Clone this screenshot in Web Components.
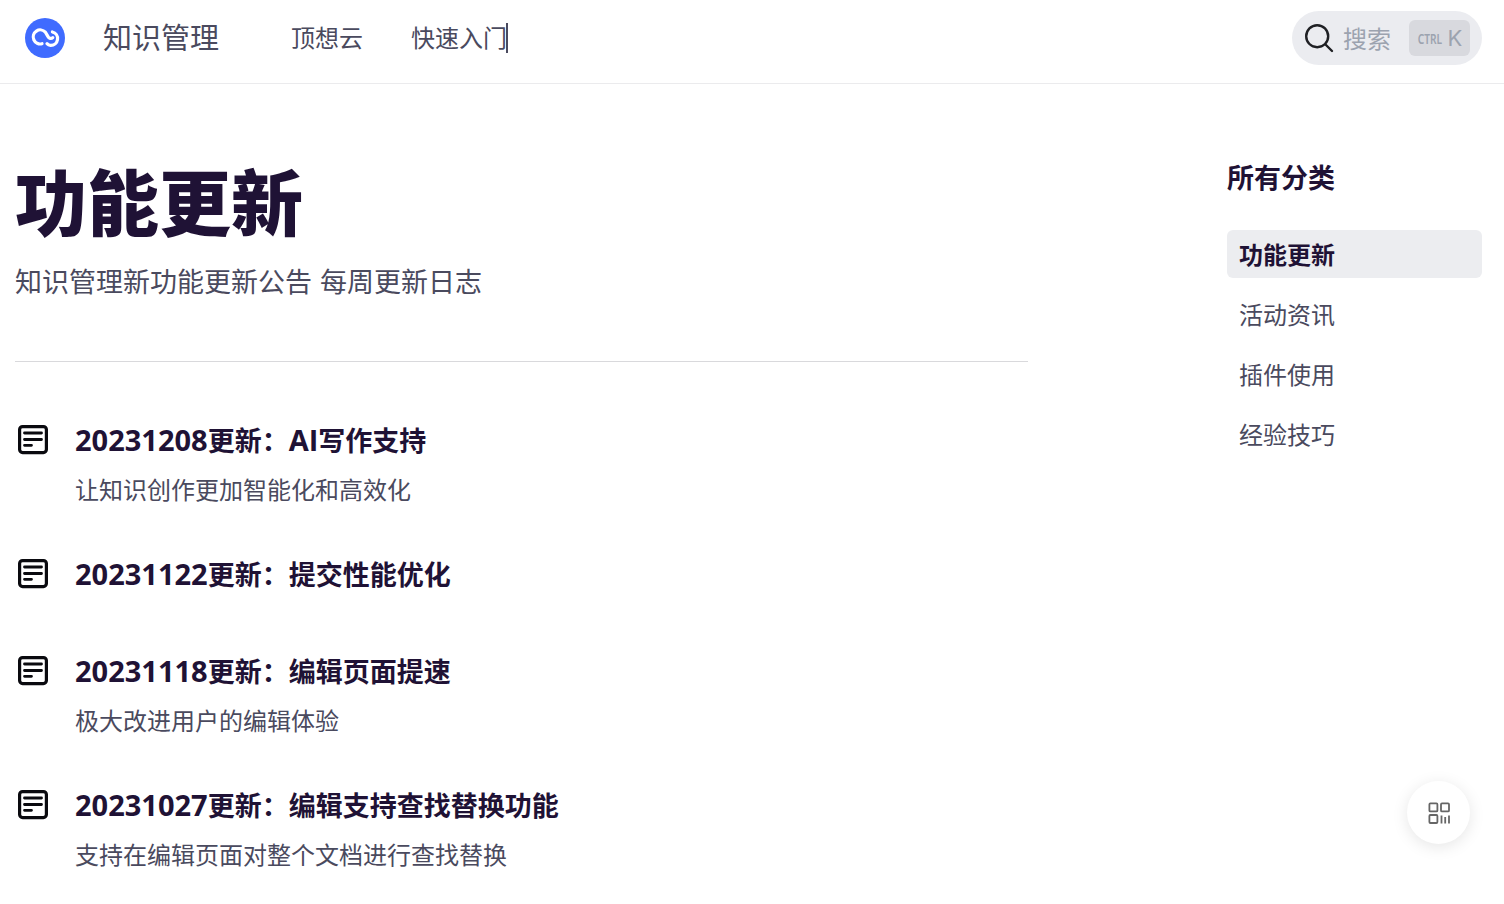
<!DOCTYPE html>
<html lang="zh">
<head>
<meta charset="utf-8">
<title>功能更新</title>
<style>
    html, body {
        margin: 0;
        padding: 0;
        height: 100%;
        overflow: hidden;
        background: #fff;
        font-family: 'Noto Sans', 'Noto Sans CJK SC', sans-serif;
    }
</style>
</head>
<body>
<site-header></site-header>
<page-layout>
    <div slot="main">
        <page-title titel="功能更新" undertekst="知识管理新功能更新公告 每周更新日志"></page-title>
        <update-item titel="20231208更新：AI写作支持" info="让知识创作更加智能化和高效化"></update-item>
        <update-item titel="20231122更新：提交性能优化"></update-item>
        <update-item titel="20231118更新：编辑页面提速" info="极大改进用户的编辑体验"></update-item>
        <update-item titel="20231027更新：编辑支持查找替换功能" info="支持在编辑页面对整个文档进行查找替换"></update-item>
    </div>
    <category-list slot="side">
        <category-link active>功能更新</category-link>
        <category-link>活动资讯</category-link>
        <category-link>插件使用</category-link>
        <category-link>经验技巧</category-link>
    </category-list>
</page-layout>
<qr-button></qr-button>

<script>
class SiteHeader extends HTMLElement {
    constructor() {
        super();
        this.attachShadow({ mode: 'open' });
    }

    connectedCallback() {
        this.shadowRoot.innerHTML = `
        <style>
            :host {
                display: flex;
                align-items: center;
                box-sizing: border-box;
                height: 84px;
                padding: 0 22px 8px 25px;
                border-bottom: 1px solid #ebebed;
                color: #4a4a5e;
            }
            #logo { width: 40px; height: 40px; flex: none; margin-right: 38px; }
            #navn { font-size: 29px; line-height: 40px; width: 188px; flex: none; }
            nav { display: flex; align-items: center; gap: 48px; font-size: 24px; line-height: 36px; }
            #inn { border-right: 2px solid #4a4a5e; width: 95px; white-space: nowrap; height: 30px; line-height: 30px; }
            #sok {
                margin-left: auto;
                display: flex;
                align-items: center;
                box-sizing: border-box;
                width: 190px;
                height: 54px;
                padding: 0 12px 0 12px;
                border-radius: 27px;
                background: #ebecf0;
                color: #9ca3af;
                font-size: 24px;
            }
            #sok svg { width: 30px; height: 30px; flex: none; margin-right: 9px; }
            kbd {
                margin-left: auto;
                display: flex;
                align-items: center;
                justify-content: center;
                gap: 5px;
                width: 61px;
                height: 36px;
                border-radius: 6px;
                background: #d8d9de;
                font-family: Inter, sans-serif;
                font-size: 22px;
                color: #9ca3af;
            }
            kbd small {
                font-family: 'Noto Sans', sans-serif;
                font-size: 15px;
                font-weight: 600;
                transform: scaleX(0.68);
                margin: 0 -5px;
            }
        </style>
        <svg id="logo" viewBox="0 0 40 40">
            <circle cx="20" cy="20" r="20" fill="#3f6bff"/>
            <path d="M17 25.7 A7 7 0 1 1 20.4 14.2 L23 18.6 A3 3 0 0 0 27.8 19.6" fill="none" stroke="#fff" stroke-width="3.2" stroke-linecap="round"/>
            <path d="M27.4 14 A6.8 6.8 0 0 1 25.6 27.4 A5.5 5.5 0 0 1 22 25.6" fill="none" stroke="#fff" stroke-width="3.2" stroke-linecap="round"/>
        </svg>
        <div id="navn">知识管理</div>
        <nav>
            <span>顶想云</span>
            <span id="inn">快速入门</span>
        </nav>
        <div id="sok">
            <svg viewBox="0 0 30 30" fill="none" stroke="#1f2024" stroke-width="2.4" stroke-linecap="round">
                <circle cx="13.2" cy="13.2" r="11"/>
                <path d="M21.5 21.5 L28 28"/>
            </svg>
            <span>搜索</span>
            <kbd><small>CTRL</small><span>K</span></kbd>
        </div>
        `
    }
}

class PageLayout extends HTMLElement {
    constructor() {
        super();
        this.attachShadow({ mode: 'open' });
    }

    connectedCallback() {
        this.shadowRoot.innerHTML = `
        <style>
            :host {
                display: flex;
                justify-content: space-between;
                padding: 0 22px 0 15px;
            }
            #main { width: 1013px; flex: none; }
            #side { width: 255px; flex: none; padding-top: 73px; }
        </style>
        <div id="main"><slot name="main"></slot></div>
        <div id="side"><slot name="side"></slot></div>
        `
    }
}

class PageTitle extends HTMLElement {
    constructor() {
        super();
        this.attachShadow({ mode: 'open' });
    }

    connectedCallback() {
        this.shadowRoot.innerHTML = `
        <style>
            :host {
                display: block;
                padding-top: 74px;
                padding-bottom: 57px;
                margin-bottom: 59px;
                border-bottom: 1px solid #d9d9dc;
            }
            h1 {
                margin: 0;
                font-size: 72px;
                line-height: 88px;
                font-weight: 900;
                color: #1f1235;
            }
            p {
                margin: 0;
                margin-top: 14px;
                font-size: 27px;
                line-height: 44px;
                word-spacing: 1px;
                color: #4a4a5e;
            }
        </style>
        <h1>${this.getAttribute('titel')}</h1>
        <p>${this.getAttribute('undertekst')}</p>
        `
    }
}

class UpdateItem extends HTMLElement {
    constructor() {
        super();
        this.attachShadow({ mode: 'open' });
    }

    // latin and digits run a little larger than the CJK in the titles
    get titel() {
        return this.getAttribute('titel').replace(/[0-9A-Za-z]+/g, '<span>$&</span>');
    }

    connectedCallback() {
        let info = this.getAttribute('info');
        this.shadowRoot.innerHTML = `
        <style>
            :host {
                display: flex;
                margin-bottom: 47px;
            }
            svg { width: 36px; height: 36px; flex: none; margin-top: 1px; margin-right: 24px; }
            h3 {
                margin: 0;
                margin-bottom: 12px;
                height: 38px;
                font-family: 'Open Sans', 'Noto Sans CJK SC', sans-serif;
                font-size: 27px;
                line-height: 38px;
                font-weight: 700;
                color: #1f1235;
            }
            h3 span { font-size: 29px; }
            p {
                margin: 0;
                font-size: 24px;
                line-height: 37px;
                color: #4a4a5e;
            }
        </style>
        <svg viewBox="0 0 36 36" fill="none" stroke="#0a0a0f" stroke-linecap="round">
            <rect x="4.6" y="4.6" width="26.8" height="26" rx="3" stroke-width="3.2"/>
            <path d="M9.5 11 H26.5 M9.5 17.5 H26.5 M9.5 23.3 H16.5" stroke-width="2.8"/>
        </svg>
        <div>
            <h3>${this.titel}</h3>
            ${info ? `<p>${info}</p>` : ''}
        </div>
        `
    }
}

class CategoryList extends HTMLElement {
    constructor() {
        super();
        this.attachShadow({ mode: 'open' });
    }

    connectedCallback() {
        this.shadowRoot.innerHTML = `
        <style>
            :host { display: block; }
            h4 {
                margin: 0 0 31px 0;
                font-size: 27px;
                line-height: 42px;
                font-weight: 700;
                color: #1f1235;
            }
            #liste { display: flex; flex-direction: column; gap: 12px; }
        </style>
        <h4>所有分类</h4>
        <div id="liste"><slot></slot></div>
        `
    }
}

class CategoryLink extends HTMLElement {
    constructor() {
        super();
        this.attachShadow({ mode: 'open' });
    }

    connectedCallback() {
        this.shadowRoot.innerHTML = `
        <style>
            :host {
                display: block;
                box-sizing: border-box;
                height: 48px;
                padding: 0 12px;
                border-radius: 6px;
                font-size: 24px;
                line-height: 50px;
                color: #4a4a5e;
            }
            :host([active]) {
                background: #ecedf0;
                font-weight: 700;
                color: #1f1235;
            }
        </style>
        <slot></slot>
        `
    }
}

class QrButton extends HTMLElement {
    constructor() {
        super();
        this.attachShadow({ mode: 'open' });
    }

    connectedCallback() {
        this.shadowRoot.innerHTML = `
        <style>
            :host {
                position: fixed;
                left: 1407px;
                top: 781px;
                width: 63px;
                height: 63px;
                display: flex;
                align-items: center;
                justify-content: center;
                border-radius: 50%;
                background: #fff;
                box-shadow: 0 3px 16px rgba(0,0,0,0.10);
            }
            svg { width: 24px; height: 24px; }
        </style>
        <svg viewBox="0 0 24 24" fill="none" stroke="#666" stroke-width="1.8">
            <rect x="2.4" y="2.4" width="8" height="8" rx="1"/>
            <rect x="14" y="2.4" width="8" height="8" rx="1"/>
            <rect x="2.4" y="14" width="8" height="8" rx="1"/>
            <path d="M14.5 14.5 V22.5 M18.2 16 V22.5 M22 14.5 V22.5"/>
        </svg>
        `
    }
}

customElements.define('site-header', SiteHeader);
customElements.define('page-layout', PageLayout);
customElements.define('page-title', PageTitle);
customElements.define('update-item', UpdateItem);
customElements.define('category-list', CategoryList);
customElements.define('category-link', CategoryLink);
customElements.define('qr-button', QrButton);
</script>
</body>
</html>
